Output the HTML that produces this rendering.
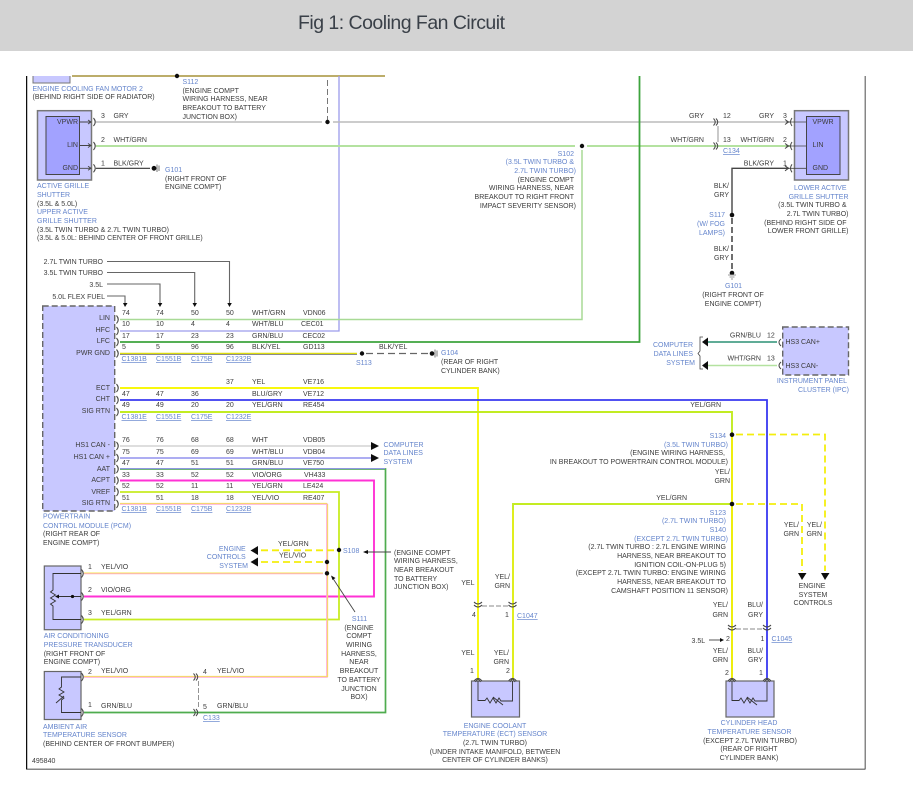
<!DOCTYPE html>
<html><head><meta charset="utf-8"><title>Fig 1: Cooling Fan Circuit</title>
<style>
html,body{margin:0;padding:0;background:#fff;width:913px;height:799px;overflow:hidden}
svg{display:block;position:absolute;left:0;top:0}
text{font-family:"Liberation Sans",sans-serif;font-size:7px;fill:#3c3c3c}
.b,.b text{fill:#6585cc}
.e{text-anchor:end}.m{text-anchor:middle}
.u{text-decoration:underline;fill:#6585cc}
.w{fill:none;stroke-linejoin:miter}
</style></head><body>
<svg width="913" height="799" viewBox="0 0 913 799">
<defs>
<filter id="soft" x="0" y="0" width="100%" height="100%"><feGaussianBlur stdDeviation="0.3"/></filter>
<path id="cl" d="M-2-3.500Q1.500 0-2 3.500M-4.500-3.500Q-1 0-4.500 3.500" fill="none" stroke="#444" stroke-width="1"/>
<path id="cr" d="M0-4Q-3 0 0 4M-7-2.500L-3.500 0-7 2.500" fill="none" stroke="#444" stroke-width="1"/>
<path id="cv" d="M-4-2Q0 2 4-2M-4 1Q0 5 4 1" fill="none" stroke="#444" stroke-width="1"/>
<path id="cu" d="M-4 3Q0-2 4 3M-2.500 4L0 .5 2.500 4" fill="none" stroke="#444" stroke-width="1"/>
<path id="pc" d="M-1.500-4Q2 0-1.500 4" fill="none" stroke="#444" stroke-width="1.100"/>
</defs>
<rect width="913" height="51" fill="#d3d3d3"/>
<text x="298" y="29" textLength="207" style="font-size:19.500px;fill:#3a4048">Fig 1: Cooling Fan Circuit</text>
<g filter="url(#soft)">
<!-- frame -->
<path class="w" d="M26.500 76V769.500H865.500V76" stroke="#111" stroke-width="1.500"/>

<!-- top -->
<rect x="33" y="70" width="37" height="13" fill="#c8c8ff" stroke="#777"/>
<rect x="26" y="60" width="60" height="16" fill="#fff"/>
<path class="w" d="M72 76H385" stroke="#957c14" stroke-width="1.300"/>
<circle cx="177" cy="76" r="2.200" fill="#111"/>
<path class="w" d="M327.500 80V122" stroke="#777" stroke-dasharray="6 3" stroke-width="1"/>
<path class="w" d="M339 76V331H120" stroke="#9c9cec" stroke-width="1.300"/>
<path class="w" d="M96 122H322M333 122H790" stroke="#bcbcbc" stroke-width="1.500"/>
<path class="w" d="M96 146H575M587 146H790" stroke="#b4e2a0" stroke-width="1.900"/>
<path class="w" d="M582 150V319.500H120" stroke="#a8da96" stroke-width="1.500"/>
<path class="w" d="M120 342H639.500V76" stroke="#3ea43e" stroke-width="1.800"/>
<circle cx="327.500" cy="122" r="2.200" fill="#111"/><circle cx="582" cy="146" r="2.200" fill="#111"/>

<!-- left grille box -->
<rect x="37.500" y="110.700" width="54" height="69.300" fill="#c8c8ff" stroke="#777" stroke-width="1.500"/>
<rect x="46" y="116.500" width="33.500" height="58" fill="#a2a2ff" stroke="#444" stroke-width="1"/>
<text class="e" x="78" y="124">VPWR</text><text class="e" x="78" y="147">LIN</text><text class="e" x="78" y="170">GND</text>
<path class="w" d="M80 122H91M88 120L91 122 88 124M80 145.500H91M88 143.500L91 145.500 88 147.500M80 168.300H91M88 166.300L91 168.300 88 170.300" stroke="#444" stroke-width=".9"/>
<use href="#pc" x="95" y="122"/><use href="#pc" x="95" y="146"/><use href="#pc" x="95" y="168.300"/>
<path class="w" d="M96 168.300H150" stroke="#333" stroke-width="1.200"/>
<circle cx="154" cy="168.300" r="2.400" fill="#111"/>
<path class="w" d="M157 164.500V172M159 165.500V171" stroke="#777" stroke-width="1"/>
<text x="101" y="118">3</text><text x="113.500" y="118">GRY</text>
<text x="101" y="142">2</text><text x="113.500" y="142">WHT/GRN</text>
<text x="101" y="165.500">1</text><text x="113.500" y="165.500">BLK/GRY</text>
<text x="165" y="172" class="b">G101</text><text x="165" y="181">(RIGHT FRONT OF</text><text x="165" y="189">ENGINE COMPT)</text>
<text x="32.500" y="91" class="b">ENGINE COOLING FAN MOTOR 2</text><text x="32.500" y="99">(BEHIND RIGHT SIDE OF RADIATOR)</text>
<text x="182.500" y="84" class="b">S112</text><text x="182.500" y="93">(ENGINE COMPT</text><text x="182.500" y="101">WIRING HARNESS, NEAR</text><text x="182.500" y="110">BREAKOUT TO BATTERY</text><text x="182.500" y="119">JUNCTION BOX)</text>
<text x="37" y="188" class="b">ACTIVE GRILLE</text><text x="37" y="197" class="b">SHUTTER</text><text x="37" y="206">(3.5L &amp; 5.0L)</text><text x="37" y="214" class="b">UPPER ACTIVE</text><text x="37" y="223" class="b">GRILLE SHUTTER</text><text x="37" y="232">(3.5L TWIN TURBO &amp; 2.7L TWIN TURBO)</text><text x="37" y="240">(3.5L &amp; 5.0L: BEHIND CENTER OF FRONT GRILLE)</text>

<!-- S102 -->
<text class="e b" x="574" y="156">S102</text><text class="e b" x="574" y="164">(3.5L TWIN TURBO &amp;</text><text class="e b" x="576" y="173">2.7L TWIN TURBO)</text>
<text class="e" x="574" y="182">(ENGINE COMPT</text><text class="e" x="574" y="190">WIRING HARNESS, NEAR</text><text class="e" x="574" y="199">BREAKOUT TO RIGHT FRONT</text><text class="e" x="576" y="208">IMPACT SEVERITY SENSOR)</text>

<!-- right grille -->
<rect x="794.500" y="110.700" width="54" height="69.300" fill="#c8c8ff" stroke="#777" stroke-width="1.500"/>
<rect x="806.500" y="116.500" width="33.500" height="58" fill="#a2a2ff" stroke="#444" stroke-width="1"/>
<text x="812.500" y="124">VPWR</text><text x="812.500" y="147">LIN</text><text x="812.500" y="170">GND</text>
<use href="#cr" x="792" y="122"/><use href="#cr" x="792" y="146"/><use href="#cr" x="792" y="168.300"/>
<path class="w" d="M786 122H806M786 146H806M786 168.300H806" stroke="#444" stroke-width=".8"/>
<use href="#cl" x="718" y="122"/><use href="#cl" x="718" y="146"/>
<path d="M718 126V142" stroke="#888" stroke-width=".9"/>
<path class="w" d="M789 168.300H732V214" stroke="#444" stroke-width="1.400"/>
<path class="w" d="M732 218V270" stroke="#333" stroke-width="1.400" stroke-dasharray="6 3"/>
<circle cx="732" cy="215" r="2.300" fill="#111"/><circle cx="732" cy="273" r="2.300" fill="#111"/>
<path d="M728 275H736M729.500 277H734.500M731 279H733" stroke="#999" stroke-width="1"/>
<text class="e" x="704" y="118">GRY</text><text class="e" x="774" y="118">GRY</text>
<text class="e" x="704" y="142">WHT/GRN</text><text class="e" x="774" y="142">WHT/GRN</text>
<text class="e" x="774" y="165.500">BLK/GRY</text>
<text class="e" x="729" y="188">BLK/</text><text class="e" x="729" y="197">GRY</text>
<text class="e b" x="725" y="217">S117</text><text class="e b" x="725" y="226">(W/ FOG</text><text class="e b" x="725" y="235">LAMPS)</text>
<text class="e" x="729" y="251">BLK/</text><text class="e" x="729" y="260">GRY</text>
<text x="723" y="118">12</text><text x="723" y="142">13</text><text x="723" y="153" class="u">C134</text>
<text x="783" y="118">3</text><text x="783" y="142">2</text><text x="783" y="165.500">1</text>
<text class="m b" x="733.500" y="288">G101</text><text class="m" x="733" y="297">(RIGHT FRONT OF</text><text class="m" x="733" y="306">ENGINE COMPT)</text>
<text class="e b" x="846.500" y="190">LOWER ACTIVE</text><text class="e b" x="848.500" y="199">GRILLE SHUTTER</text>
<text class="e" x="846.500" y="207">(3.5L TWIN TURBO &amp;</text><text class="e" x="848.500" y="216">2.7L TWIN TURBO)</text><text class="e" x="846.500" y="225">(BEHIND RIGHT SIDE OF</text><text class="e" x="848.500" y="233">LOWER FRONT GRILLE)</text>

<!-- option lines -->
<text class="e" x="103" y="264">2.7L TWIN TURBO</text><text class="e" x="103" y="275">3.5L TWIN TURBO</text><text class="e" x="103" y="287">3.5L</text><text class="e" x="105" y="299">5.0L FLEX FUEL</text>
<path class="w" d="M107 261.500H229.500V303M107 272.500H194.700V303M107 284H160V303M107 296H125V303" stroke="#666" stroke-width="1.100"/>
<path d="M123 303H127.500L125 307ZM157.800 303H162.300L160 307ZM192.500 303H197L194.700 307ZM227.300 303H231.800L229.500 307Z" fill="#111"/>

<!-- PCM -->
<rect x="42.700" y="306" width="72" height="205" fill="#c8c8ff" stroke="#666" stroke-width="1.400" stroke-dasharray="6 3"/>
<text class="e" x="110" y="320">LIN</text><text class="e" x="110" y="332">HFC</text><text class="e" x="110" y="343">LFC</text><text class="e" x="110" y="355">PWR GND</text>
<text class="e" x="110" y="390">ECT</text><text class="e" x="110" y="401">CHT</text><text class="e" x="110" y="413">SIG RTN</text>
<text class="e" x="110" y="447">HS1 CAN -</text><text class="e" x="110" y="459">HS1 CAN +</text><text class="e" x="110" y="471">AAT</text><text class="e" x="110" y="482">ACPT</text><text class="e" x="110" y="494">VREF</text><text class="e" x="110" y="505">SIG RTN</text>
<use href="#pc" x="118" y="319.500"/><use href="#pc" x="118" y="331"/><use href="#pc" x="118" y="342"/><use href="#pc" x="118" y="353.500"/>
<use href="#pc" x="118" y="388"/><use href="#pc" x="118" y="400"/><use href="#pc" x="118" y="412"/>
<use href="#pc" x="118" y="446"/><use href="#pc" x="118" y="458"/><use href="#pc" x="118" y="469"/><use href="#pc" x="118" y="480.500"/><use href="#pc" x="118" y="492"/><use href="#pc" x="118" y="504"/>
<!-- wires from PCM -->
<path class="w" d="M120 353.500H357" stroke="#dcdc10" stroke-width="1.500"/><path class="w" d="M120 354.300H357" stroke="#444" stroke-width=".7"/>
<circle cx="362" cy="353.500" r="2.200" fill="#111"/>
<path class="w" d="M366 353.500H429" stroke="#666" stroke-width="1.300" stroke-dasharray="7 4"/>
<circle cx="432" cy="353.500" r="2.300" fill="#111"/><path d="M435 349.500V357.500M437 350.500V356.500" stroke="#777" stroke-width="1"/>
<path class="w" d="M120 388H478V680" stroke="#f8f810" stroke-width="1.900"/>
<path class="w" d="M120 400H767V680" stroke="#3838f0" stroke-width="1.800"/>
<path class="w" d="M120 412H732V680" stroke="#c2ec20" stroke-width="1.900"/>
<path class="w" d="M732 436V680" stroke="#f0ee10" stroke-width="1.900"/>
<path class="w" d="M120 446H371" stroke="#d4d4d4" stroke-width="1.600"/>
<path class="w" d="M120 458H371" stroke="#9292ee" stroke-width="1.600"/>
<path d="M371 442L379 446 371 450ZM371 454L379 458 371 462Z" fill="#111"/>
<path class="w" d="M120 469H385.500V712.500H84" stroke="#50ac50" stroke-width="1.700"/>
<path class="w" d="M120 468.600H385" stroke="#9292ee" stroke-width="1"/>
<path class="w" d="M120 480.500H374V596.500H84" stroke="#ff30d4" stroke-width="1.900"/>
<path class="w" d="M120 492H339V619.500H84" stroke="#c8ec20" stroke-width="1.800"/>
<path class="w" d="M120 504H327V677H84" stroke="#ffa8d4" stroke-width="1.600"/>
<path class="w" d="M120 503.300H327M327.700 504V677M327.700 676.300H84" stroke="#f4e450" stroke-width=".9"/>
<path class="w" d="M84 573.500H323" stroke="#ffa8d4" stroke-width="1.600"/><path class="w" d="M84 572.900H323" stroke="#f4e450" stroke-width=".9"/>
<!-- table -->
<text x="122" y="315">74</text><text x="156" y="315">74</text><text x="191" y="315">50</text><text x="226" y="315">50</text><text x="252" y="315">WHT/GRN</text><text x="303" y="315">VDN06</text>
<text x="122" y="326">10</text><text x="156" y="326">10</text><text x="191" y="326">4</text><text x="226" y="326">4</text><text x="252" y="326">WHT/BLU</text><text x="301" y="326">CEC01</text>
<text x="122" y="338">17</text><text x="156" y="338">17</text><text x="191" y="338">23</text><text x="226" y="338">23</text><text x="252" y="338">GRN/BLU</text><text x="302.500" y="338">CEC02</text>
<text x="122" y="349">5</text><text x="156" y="349">5</text><text x="191" y="349">96</text><text x="226" y="349">96</text><text x="252" y="349">BLK/YEL</text><text x="303" y="349">GD113</text>
<text x="121.500" y="361" class="u">C1381B</text><text x="156" y="361" class="u">C1551B</text><text x="191" y="361" class="u">C175B</text><text x="226" y="361" class="u">C1232B</text>
<text x="226" y="384">37</text><text x="252" y="384">YEL</text><text x="303" y="384">VE716</text>
<text x="122" y="396">47</text><text x="156" y="396">47</text><text x="191" y="396">36</text><text x="252" y="396">BLU/GRY</text><text x="303" y="396">VE712</text>
<text x="122" y="407">49</text><text x="156" y="407">49</text><text x="191" y="407">20</text><text x="226" y="407">20</text><text x="252" y="407">YEL/GRN</text><text x="303" y="407">RE454</text>
<text x="121.500" y="419" class="u">C1381E</text><text x="156" y="419" class="u">C1551E</text><text x="191" y="419" class="u">C175E</text><text x="226" y="419" class="u">C1232E</text>
<text x="122" y="442">76</text><text x="156" y="442">76</text><text x="191" y="442">68</text><text x="226" y="442">68</text><text x="252" y="442">WHT</text><text x="303" y="442">VDB05</text>
<text x="122" y="454">75</text><text x="156" y="454">75</text><text x="191" y="454">69</text><text x="226" y="454">69</text><text x="252" y="454">WHT/BLU</text><text x="303" y="454">VDB04</text>
<text x="122" y="465">47</text><text x="156" y="465">47</text><text x="191" y="465">51</text><text x="226" y="465">51</text><text x="252" y="465">GRN/BLU</text><text x="303" y="465">VE750</text>
<text x="122" y="477">33</text><text x="156" y="477">33</text><text x="191" y="477">52</text><text x="226" y="477">52</text><text x="252" y="477">VIO/ORG</text><text x="304" y="477">VH433</text>
<text x="122" y="488">52</text><text x="156" y="488">52</text><text x="191" y="488">11</text><text x="226" y="488">11</text><text x="252" y="488">YEL/GRN</text><text x="303" y="488">LE424</text>
<text x="122" y="500">51</text><text x="156" y="500">51</text><text x="191" y="500">18</text><text x="226" y="500">18</text><text x="252" y="500">YEL/VIO</text><text x="303" y="500">RE407</text>
<text x="121.500" y="511" class="u">C1381B</text><text x="156" y="511" class="u">C1551B</text><text x="191" y="511" class="u">C175B</text><text x="226" y="511" class="u">C1232B</text>
<text x="379" y="349">BLK/YEL</text><text x="356" y="365" class="b">S113</text>
<text x="441" y="355" class="b">G104</text><text x="441" y="364">(REAR OF RIGHT</text><text x="441" y="373">CYLINDER BANK)</text>
<text x="383.500" y="447" class="b">COMPUTER</text><text x="383.500" y="455" class="b">DATA LINES</text><text x="383.500" y="464" class="b">SYSTEM</text>
<text x="43" y="518.500" class="b">POWERTRAIN</text><text x="43" y="528" class="b">CONTROL MODULE (PCM)</text><text x="43" y="536">(RIGHT REAR OF</text><text x="43" y="545">ENGINE COMPT)</text>

<!-- splices -->
<path class="w" d="M261 550.300H336M261 562H324" stroke="#f4ee10" stroke-width="1.800" stroke-dasharray="7 4"/>
<path d="M258 546V555L250.500 550.500ZM258 557.500V566.500L250.500 562Z" fill="#111"/>
<circle cx="339" cy="550" r="2.200" fill="#111"/><circle cx="327" cy="562" r="2.200" fill="#111"/><circle cx="327" cy="573.300" r="2.200" fill="#111"/>
<text x="278" y="546">YEL/GRN</text><text x="279" y="557.500">YEL/VIO</text>
<text class="e b" x="245.700" y="551">ENGINE</text><text class="e b" x="245.700" y="559">CONTROLS</text><text class="e b" x="248" y="568">SYSTEM</text>
<text x="343" y="553" class="b">S108</text>
<path d="M391 552H367" stroke="#444" stroke-width=".9"/><path d="M363 552L368 550V554Z" fill="#111"/>
<path d="M355 612L332 577" stroke="#444" stroke-width=".9"/><path d="M331 575.500L335.500 578 332.500 580Z" fill="#111"/>
<text x="394" y="555">(ENGINE COMPT</text><text x="394" y="563">WIRING HARNESS,</text><text x="394" y="572">NEAR BREAKOUT</text><text x="394" y="581">TO BATTERY</text><text x="394" y="589">JUNCTION BOX)</text>
<text class="m b" x="359.500" y="621">S111</text><text class="m" x="359" y="630">(ENGINE</text><text class="m" x="359" y="638">COMPT</text><text class="m" x="359" y="647">WIRING</text><text class="m" x="359" y="656">HARNESS,</text><text class="m" x="359" y="664">NEAR</text><text class="m" x="359" y="673">BREAKOUT</text><text class="m" x="359" y="682">TO BATTERY</text><text class="m" x="359" y="691">JUNCTION</text><text class="m" x="359" y="699">BOX)</text>

<!-- AC pressure -->
<rect x="44.300" y="566" width="36.700" height="63.700" fill="#c8c8ff" stroke="#666" stroke-width="1.200"/>
<path class="w" d="M81 573.500H53V590L50.500 592 55.500 595 50.500 598 55.500 601 50.500 604 53 606V619.500H81M56 596.500H81" stroke="#333" stroke-width=".9"/>
<path d="M55 596.500L59 594.500V598.500Z" fill="#111"/><circle cx="72.500" cy="596.500" r="1.600" fill="#111"/>
<use href="#pc" x="83" y="573.500"/><use href="#pc" x="83" y="596.500"/><use href="#pc" x="83" y="619.500"/>
<text x="88" y="569">1</text><text x="101" y="569">YEL/VIO</text><text x="88" y="592">2</text><text x="101" y="592">VIO/ORG</text><text x="88" y="615">3</text><text x="101" y="615">YEL/GRN</text>
<text x="43.700" y="638" class="b">AIR CONDITIONING</text><text x="43.700" y="647" class="b">PRESSURE TRANSDUCER</text><text x="43.700" y="656">(RIGHT FRONT OF</text><text x="43.700" y="664">ENGINE COMPT)</text>

<!-- Ambient -->
<rect x="44.300" y="671.500" width="36.700" height="48" fill="#c8c8ff" stroke="#666" stroke-width="1.200"/>
<path class="w" d="M81 677H61.500V687L59 689 64 692 59 695 64 698 61.500 700V712.500H81M56 703L64 696" stroke="#333" stroke-width=".9"/>
<use href="#pc" x="83" y="677"/><use href="#pc" x="83" y="712.500"/>
<use href="#cl" x="198" y="677"/><use href="#cl" x="198" y="712.500"/>
<path d="M198.500 681V708" stroke="#888" stroke-width=".9" stroke-dasharray="5 2"/>
<text x="88" y="674">2</text><text x="101" y="673">YEL/VIO</text><text x="88" y="707">1</text><text x="101" y="708">GRN/BLU</text>
<text x="203" y="674">4</text><text x="217" y="673">YEL/VIO</text><text x="203" y="709">5</text><text x="217" y="708">GRN/BLU</text><text x="203" y="720" class="u">C133</text>
<text x="43" y="729" class="b">AMBIENT AIR</text><text x="43" y="737" class="b">TEMPERATURE SENSOR</text><text x="43" y="746">(BEHIND CENTER OF FRONT BUMPER)</text>
<text x="32" y="763">495840</text>

<!-- right splices -->
<path class="w" d="M730 504H513V680" stroke="#c4ec20" stroke-width="1.900"/>
<path class="w" d="M513 510V680" stroke="#f0ee10" stroke-width="1.200"/>
<circle cx="732" cy="434.700" r="2.300" fill="#111"/><circle cx="732" cy="504" r="2.300" fill="#111"/>
<path class="w" d="M736 434.500H825V571M736 504H802V571" stroke="#f4ee10" stroke-width="1.800" stroke-dasharray="7 4"/>
<path d="M798 573H806.500L802 580ZM821 573H829.500L825 580Z" fill="#111"/>
<text class="e" x="721" y="407">YEL/GRN</text>
<text class="e b" x="726" y="438">S134</text><text class="e b" x="728" y="447">(3.5L TWIN TURBO)</text><text class="e" x="725" y="455">(ENGINE WIRING HARNESS,</text><text class="e" x="728" y="464">IN BREAKOUT TO POWERTRAIN CONTROL MODULE)</text>
<text class="e" x="730" y="474">YEL/</text><text class="e" x="730" y="483">GRN</text><text class="e" x="687" y="500">YEL/GRN</text>
<text class="e b" x="726" y="515">S123</text><text class="e b" x="726" y="523">(2.7L TWIN TURBO)</text><text class="e b" x="726" y="532">S140</text><text class="e b" x="728" y="541">(EXCEPT 2.7L TWIN TURBO)</text>
<text class="e" x="726" y="549">(2.7L TWIN TURBO : 2.7L ENGINE WIRING</text><text class="e" x="726" y="558">HARNESS, NEAR BREAKOUT TO</text><text class="e" x="726" y="567">IGNITION COIL-ON-PLUG 5)</text><text class="e" x="726" y="575">(EXCEPT 2.7L TWIN TURBO: ENGINE WIRING</text><text class="e" x="726" y="584">HARNESS, NEAR BREAKOUT TO</text><text class="e" x="728" y="593">CAMSHAFT POSITION 11 SENSOR)</text>
<text class="e" x="799" y="527">YEL/</text><text class="e" x="799" y="536">GRN</text><text class="e" x="822" y="527">YEL/</text><text class="e" x="822" y="536">GRN</text>
<text class="m" x="812" y="588">ENGINE</text><text class="m" x="813" y="597">SYSTEM</text><text class="m" x="813" y="605">CONTROLS</text>

<!-- C1047 -->
<use href="#cv" x="478" y="604"/><use href="#cv" x="512.500" y="604"/><path d="M482 606H508" stroke="#888" stroke-width=".9" stroke-dasharray="5 2"/>
<text class="e" x="474.500" y="585">YEL</text><text class="e" x="510" y="579">YEL/</text><text class="e" x="510" y="588">GRN</text>
<text x="472" y="617">4</text><text x="505" y="617">1</text><text x="517" y="618" class="u">C1047</text>
<text class="e" x="474.500" y="655">YEL</text><text class="e" x="509" y="655">YEL/</text><text class="e" x="509" y="664">GRN</text>
<text x="470" y="673">1</text><text x="506" y="673">2</text>
<rect x="471.500" y="681" width="48" height="36" fill="#c8c8ff" stroke="#666" stroke-width="1.200"/>
<path class="w" d="M478 681V700.500H485L487 698 490 703 493 698 496 703 499 698 501 701H512.500V681M493 697L503 705" stroke="#333" stroke-width=".9"/>
<use href="#cu" x="478" y="678"/><use href="#cu" x="512.500" y="678"/>

<!-- C1045 -->
<use href="#cv" x="732" y="627"/><use href="#cv" x="767" y="627"/><path d="M736 629H763" stroke="#888" stroke-width=".9" stroke-dasharray="5 2"/>
<text class="e" x="728" y="607">YEL/</text><text class="e" x="728" y="617">GRN</text><text class="e" x="763" y="607">BLU/</text><text class="e" x="763" y="617">GRY</text>
<text x="726" y="641">2</text><text x="760.500" y="641">1</text><text x="771.500" y="641" class="u">C1045</text>
<text x="691.500" y="643">3.5L</text><path d="M709 640H721" stroke="#555" stroke-width="1"/><path d="M720 638L724 640 720 642Z" fill="#111"/>
<text class="e" x="728" y="653">YEL/</text><text class="e" x="728" y="662">GRN</text><text class="e" x="763" y="653">BLU/</text><text class="e" x="763" y="662">GRY</text>
<text x="725" y="675">2</text><text x="759" y="675">1</text>
<rect x="726" y="681" width="48" height="36" fill="#c8c8ff" stroke="#666" stroke-width="1.200"/>
<path class="w" d="M732 681V700.500H739L741 698 744 703 747 698 750 703 753 698 755 701H767V681M747 697L757 705" stroke="#333" stroke-width=".9"/>
<use href="#cu" x="732" y="678"/><use href="#cu" x="767" y="678"/>
<text class="m b" x="495" y="728">ENGINE COOLANT</text><text class="m b" x="495" y="736">TEMPERATURE (ECT) SENSOR</text><text class="m" x="495" y="745">(2.7L TWIN TURBO)</text><text class="m" x="495" y="754">(UNDER INTAKE MANIFOLD, BETWEEN</text><text class="m" x="495" y="762">CENTER OF CYLINDER BANKS)</text>
<text class="m b" x="749" y="725">CYLINDER HEAD</text><text class="m b" x="749.500" y="734">TEMPERATURE SENSOR</text><text class="m" x="750" y="743">(EXCEPT 2.7L TWIN TURBO)</text><text class="m" x="749" y="751">(REAR OF RIGHT</text><text class="m" x="749" y="760">CYLINDER BANK)</text>

<!-- IPC -->
<rect x="782.700" y="327" width="65.800" height="48" fill="#c8c8ff" stroke="#666" stroke-width="1.400" stroke-dasharray="6 3"/>
<text x="785.500" y="344">HS3 CAN+</text><text x="785.500" y="368">HS3 CAN-</text>
<path class="w" d="M708 342H777" stroke="#4aa088" stroke-width="1.800"/><path class="w" d="M708 365.500H777" stroke="#b4e2a0" stroke-width="1.600"/>
<path d="M708 337.500V346.500L702 342ZM708 361V370L702 365.500Z" fill="#111"/>
<path class="w" d="M703 337H700V351L698 353.500 700 356V369H703" stroke="#444" stroke-width=".8"/>
<path d="M781 339Q777 342 781 346M781 362Q777 365.500 781 369" fill="none" stroke="#444" stroke-width="1"/>
<text class="e" x="761" y="337.500">GRN/BLU</text><text x="767" y="337.500">12</text><text class="e" x="761" y="360.500">WHT/GRN</text><text x="767" y="360.500">13</text>
<text class="e b" x="693" y="347">COMPUTER</text><text class="e b" x="693" y="356">DATA LINES</text><text class="e b" x="695" y="365">SYSTEM</text>
<text class="e b" x="847" y="383">INSTRUMENT PANEL</text><text class="e b" x="849" y="392">CLUSTER (IPC)</text>
</g>
</svg>
</body></html>
